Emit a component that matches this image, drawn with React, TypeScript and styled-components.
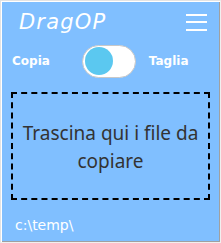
import React, { useState } from "react";
import styled, { createGlobalStyle } from "styled-components";

const Global = createGlobalStyle`
  html, body { margin: 0; padding: 0; background: #fff; }
  * { box-sizing: border-box; }
`;

const Frame = styled.div`
  width: 221px;
  height: 243px;
  background: #80bfff;
  border-style: solid;
  border-width: 1px;
  border-color: #e3e3e3 #f0f0f0 #f0f0f0 #e3e3e3;
  box-shadow: inset 1px 1px 0 #ffffff, inset -1px -1px 0 #a0a0a0;
  display: flex;
  flex-direction: column;
  padding: 0 10px 0 10px;
`;

const Header = styled.div`
  height: 40px;
  display: flex;
  align-items: center;
  justify-content: space-between;
  padding: 2px 3px 0 8px;
`;

const Title = styled.div`
  font-family: "DejaVu Sans", sans-serif;
  font-style: italic;
  font-size: 21px;
  letter-spacing: 1.2px;
  color: #ffffff;
`;

const Burger = styled.div`
  width: 21px;
  display: flex;
  flex-direction: column;
  gap: 5.5px;
  & > span {
    display: block;
    height: 2px;
    background: #ffffff;
  }
`;

const ToggleRow = styled.div`
  display: flex;
  align-items: center;
  height: 40px;
  padding: 0 0 0 1px;
`;

const Label = styled.span`
  font-family: "DejaVu Sans", sans-serif;
  font-weight: bold;
  font-size: 12px;
  color: #ffffff;
`;

const Track = styled.div`
  width: 54px;
  height: 33px;
  border-radius: 17px;
  background: #ffffff;
  border: 1px solid #c8c8c8;
  display: flex;
  align-items: center;
  padding: 0 2px;
  margin: 0 13px 0 32px;
`;

const Knob = styled.div`
  width: 28px;
  height: 28px;
  border-radius: 50%;
  background: #5bc8f0;
`;

const Drop = styled.div`
  margin-top: 11px;
  height: 108px;
  border: 2px dashed #000000;
  display: flex;
  align-items: center;
  justify-content: center;
  text-align: center;
  padding: 2px 2px 0;
  font-family: "Noto Sans", sans-serif;
  font-size: 19px;
  line-height: 28px;
  color: #333333;
`;

const Path = styled.div`
  margin-top: auto;
  height: 35px;
  padding-left: 4px;
  padding-top: 10px;
  font-family: "DejaVu Sans", sans-serif;
  font-size: 14px;
  color: #ffffff;
`;

export default function App() {
  const [on] = useState(false);
  return (
    <>
      <Global />
      <Frame>
        <Header>
          <Title>DragOP</Title>
          <Burger>
            <span />
            <span />
            <span />
          </Burger>
        </Header>
        <ToggleRow>
          <Label>Copia</Label>
          <Track>
            <Knob style={{ marginLeft: on ? "auto" : 0 }} />
          </Track>
          <Label>Taglia</Label>
        </ToggleRow>
        <Drop>Trascina qui i file da copiare</Drop>
        <Path>c:\temp\</Path>
      </Frame>
    </>
  );
}
